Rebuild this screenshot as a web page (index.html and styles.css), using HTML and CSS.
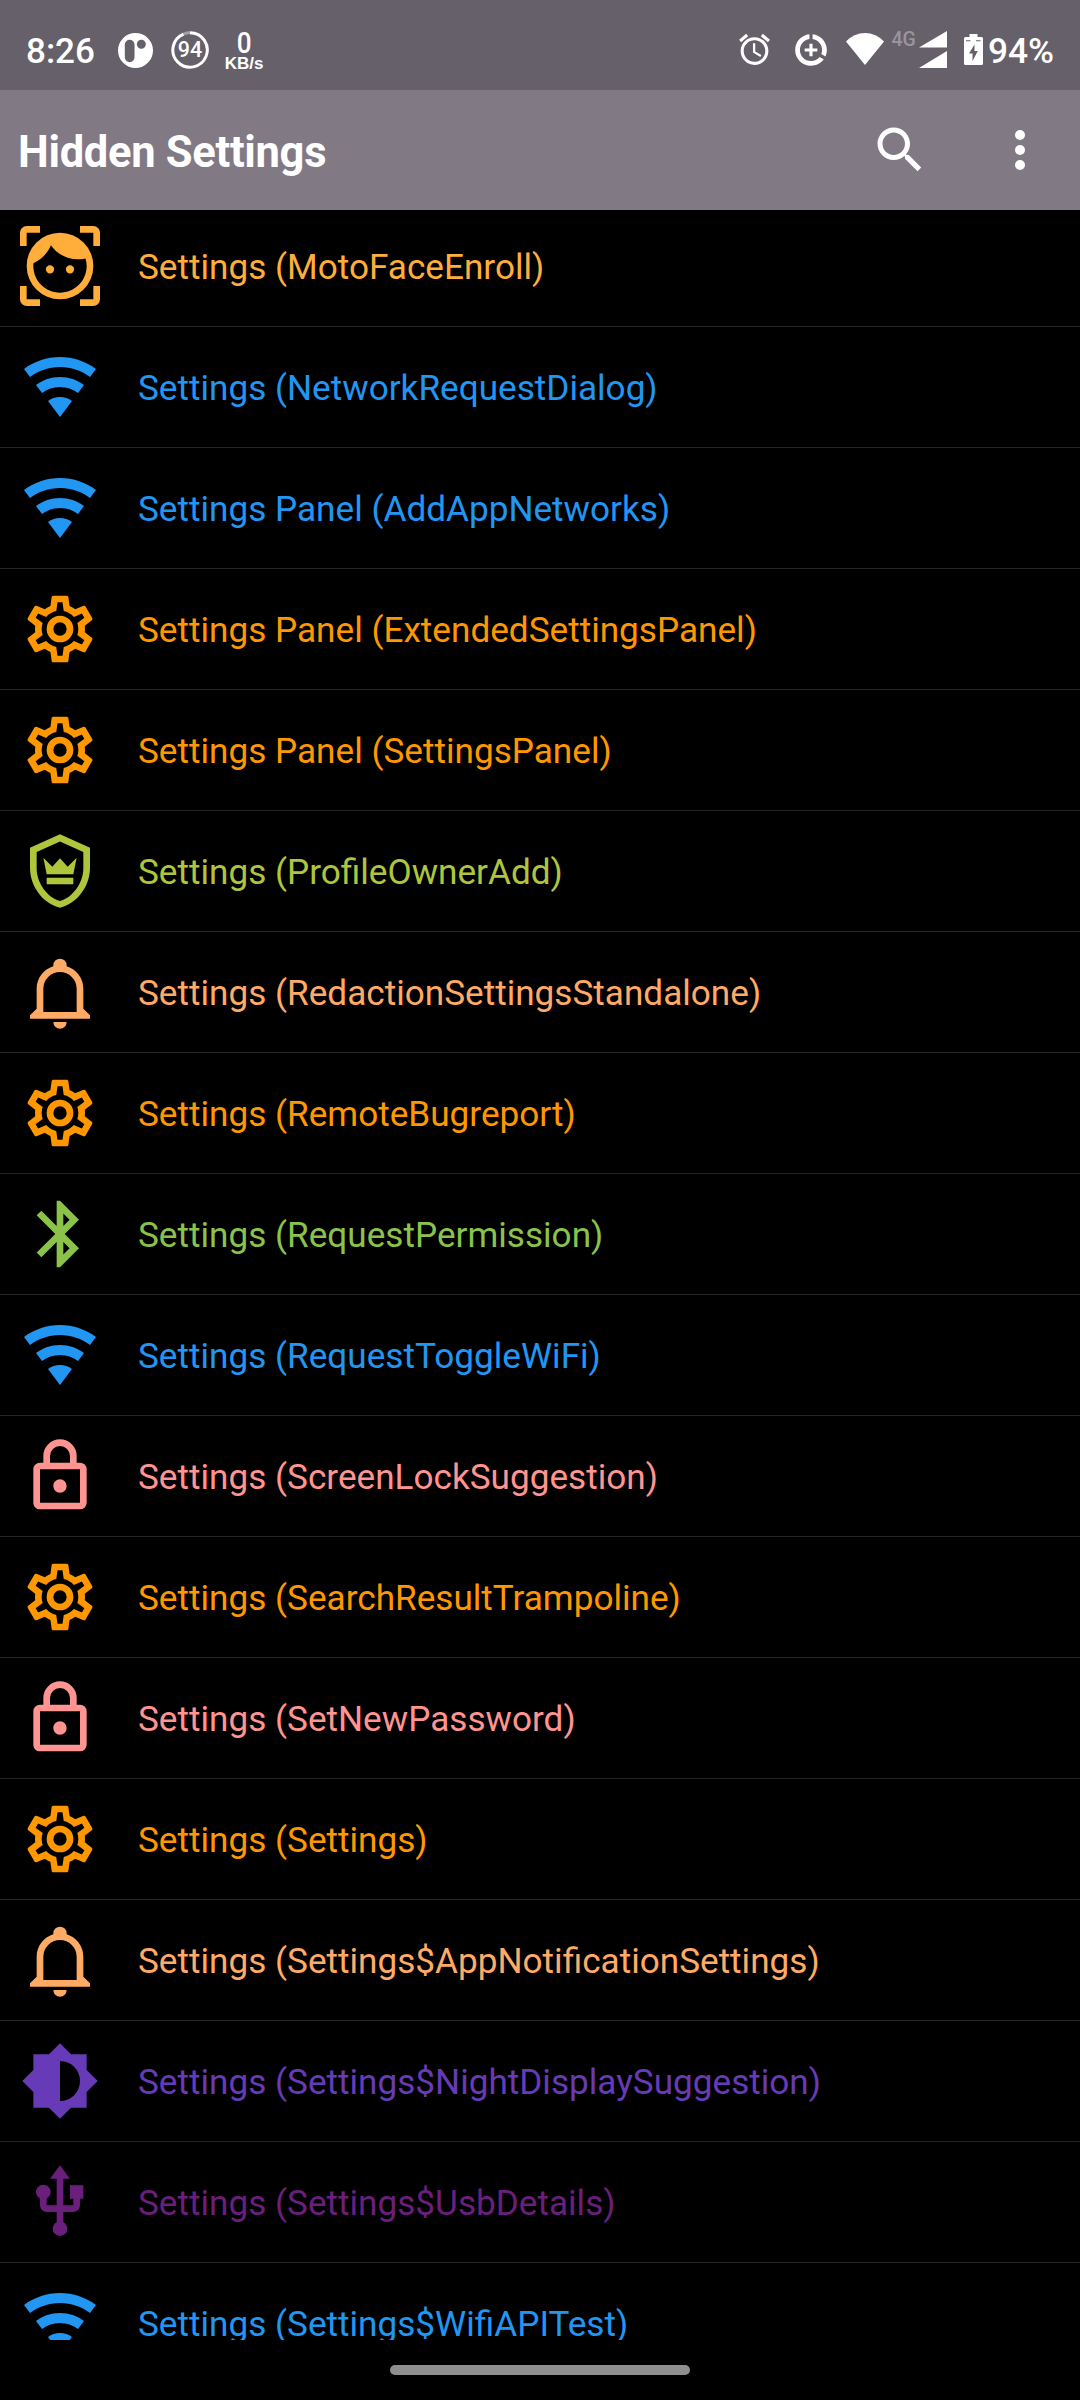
FILE: index.html
```
<!DOCTYPE html>
<html lang="en">
<head>
<meta charset="utf-8">
<title>Hidden Settings</title>
<link rel="stylesheet" href="styles.css">
</head>
<body>
<svg class="sprite" xmlns="http://www.w3.org/2000/svg">
  <symbol id="face" viewBox="0 0 24 24"><path d="M9,11.75A1.25,1.25 0 0,0 7.75,13A1.25,1.25 0 0,0 9,14.25A1.25,1.25 0 0,0 10.25,13A1.25,1.25 0 0,0 9,11.75M15,11.75A1.25,1.25 0 0,0 13.75,13A1.25,1.25 0 0,0 15,14.25A1.25,1.25 0 0,0 16.25,13A1.25,1.25 0 0,0 15,11.75M12,2A10,10 0 0,0 2,12A10,10 0 0,0 12,22A10,10 0 0,0 22,12A10,10 0 0,0 12,2M12,20C7.59,20 4,16.41 4,12C4,11.71 4,11.42 4.05,11.14C6.41,10.09 8.28,8.16 9.26,5.77C11.07,8.33 14.05,10 17.42,10C18.2,10 18.95,9.91 19.67,9.74C19.88,10.45 20,11.21 20,12C20,16.41 16.41,20 12,20M0,2A2,2 0 0,1 2,0H6V2H2V6H0V2M24,22A2,2 0 0,1 22,24H18V22H22V18H24V22M2,24A2,2 0 0,1 0,22V18H2V22H6V24H2M22,0A2,2 0 0,1 24,2V6H22V2H18V0H22Z"/></symbol>
  <symbol id="wifi" viewBox="0 0 24 24"><path d="M12,21L15.6,16.2C14.6,15.45 13.35,15 12,15C10.65,15 9.4,15.45 8.4,16.2L12,21M12,3C7.95,3 4.21,4.34 1.2,6.6L3,9C5.5,7.12 8.62,6 12,6C15.38,6 18.5,7.12 21,9L22.8,6.6C19.79,4.34 16.05,3 12,3M12,9C9.3,9 6.81,9.89 4.8,11.4L6.6,13.8C8.1,12.67 9.97,12 12,12C14.03,12 15.9,12.67 17.4,13.8L19.2,11.4C17.19,9.89 14.7,9 12,9Z"/></symbol>
  <symbol id="cog" viewBox="0 0 24 24"><path d="M12,8A4,4 0 0,1 16,12A4,4 0 0,1 12,16A4,4 0 0,1 8,12A4,4 0 0,1 12,8M12,10A2,2 0 0,0 10,12A2,2 0 0,0 12,14A2,2 0 0,0 14,12A2,2 0 0,0 12,10M10,22C9.75,22 9.54,21.82 9.5,21.58L9.13,18.93C8.5,18.68 7.96,18.34 7.44,17.94L4.95,18.95C4.73,19.03 4.46,18.95 4.34,18.73L2.34,15.27C2.21,15.05 2.27,14.78 2.46,14.63L4.57,12.97L4.5,12L4.57,11L2.46,9.37C2.27,9.22 2.21,8.95 2.34,8.73L4.34,5.27C4.46,5.05 4.73,4.96 4.95,5.05L7.44,6.05C7.96,5.66 8.5,5.32 9.13,5.07L9.5,2.42C9.54,2.18 9.75,2 10,2H14C14.25,2 14.46,2.18 14.5,2.42L14.87,5.07C15.5,5.32 16.04,5.66 16.56,6.05L19.05,5.05C19.27,4.96 19.54,5.05 19.66,5.27L21.66,8.73C21.79,8.95 21.73,9.22 21.54,9.37L19.43,11L19.5,12L19.43,13L21.54,14.63C21.73,14.78 21.79,15.05 21.66,15.27L19.66,18.73C19.54,18.95 19.27,19.04 19.05,18.95L16.56,17.95C16.04,18.34 15.5,18.68 14.87,18.93L14.5,21.58C14.46,21.82 14.25,22 14,22H10M11.25,4L10.88,6.61C9.68,6.86 8.62,7.5 7.85,8.39L5.44,7.35L4.69,8.65L6.8,10.2C6.4,11.37 6.4,12.64 6.8,13.8L4.68,15.36L5.43,16.66L7.86,15.62C8.63,16.5 9.68,17.14 10.87,17.38L11.24,20H12.76L13.13,17.39C14.32,17.14 15.37,16.5 16.14,15.62L18.57,16.66L19.32,15.36L17.2,13.81C17.6,12.64 17.6,11.37 17.2,10.2L19.31,8.65L18.56,7.35L16.15,8.39C15.38,7.5 14.32,6.86 13.12,6.62L12.75,4H11.25Z"/></symbol>
  <symbol id="shield" viewBox="0 0 24 24"><path d="M21,11C21,16.55 17.16,21.74 12,23C6.84,21.74 3,16.55 3,11V5L12,1L21,5V11M12,21C15.75,20 19,15.54 19,11.22V6.3L12,3.18L5,6.3V11.22C5,15.54 8.25,20 12,21ZM7,8L8,13H16L17,8L14.3,10.7L12,8.2L9.7,10.7L7,8ZM8,14H16V15.8L15.8,16H8.2L8,15.8Z"/></symbol>
  <symbol id="bell" viewBox="0 0 24 24"><path d="M10,21H14A2,2 0 0,1 12,23A2,2 0 0,1 10,21M21,19V20H3V19L5,17V11C5,7.9 7.03,5.17 10,4.29C10,4.19 10,4.1 10,4A2,2 0 0,1 12,2A2,2 0 0,1 14,4C14,4.1 14,4.19 14,4.29C16.97,5.17 19,7.9 19,11V17L21,19M17,11A5,5 0 0,0 12,6A5,5 0 0,0 7,11V18H17V11Z"/></symbol>
  <symbol id="bluetooth" viewBox="0 0 24 24"><path d="M14.88,16.29L13,18.17V14.41M13,5.83L14.88,7.71L13,9.58M17.71,7.71L12,2H11V9.58L6.41,5L5,6.41L10.59,12L5,17.58L6.41,19L11,14.41V22H12L17.71,16.29L13.41,12L17.71,7.71Z"/></symbol>
  <symbol id="lock" viewBox="0 0 24 24"><path d="M12,17C10.89,17 10,16.1 10,15C10,13.89 10.89,13 12,13A2,2 0 0,1 14,15A2,2 0 0,1 12,17M18,20V10H6V20H18M18,8A2,2 0 0,1 20,10V20A2,2 0 0,1 18,22H6C4.89,22 4,21.1 4,20V10C4,8.89 4.89,8 6,8H7V6A5,5 0 0,1 12,1A5,5 0 0,1 17,6V8H18M12,3A3,3 0 0,0 9,6V8H15V6A3,3 0 0,0 12,3Z"/></symbol>
  <symbol id="brightness" viewBox="0 0 24 24"><path d="M12,18V6A6,6 0 0,1 18,12A6,6 0 0,1 12,18M20,15.31L23.31,12L20,8.69V4H15.31L12,0.69L8.69,4H4V8.69L0.69,12L4,15.31V20H8.69L12,23.31L15.31,20H20V15.31Z"/></symbol>
  <symbol id="usb" viewBox="0 0 24 24"><path d="M15,7V11H16V13H13V5H15L12,1L9,5H11V13H8V10.93C8.7,10.56 9.2,9.85 9.2,9C9.2,7.78 8.21,6.8 7,6.8C5.78,6.8 4.8,7.78 4.8,9C4.8,9.85 5.3,10.56 6,10.93V13A2,2 0 0,0 8,15H11V18.05C10.29,18.41 9.8,19.15 9.8,20A2.2,2.2 0 0,0 12,22.2A2.2,2.2 0 0,0 14.2,20C14.2,19.15 13.71,18.41 13,18.05V15H16A2,2 0 0,0 18,13V11H19V7H15Z"/></symbol>
</svg>
<div class="screen">
  <header class="status">
    <span class="clock">8:26</span>
    <svg class="st-app" viewBox="0 0 36 36"><path fill-rule="evenodd" d="M18,0A18,18 0 0,1 18,36A18,18 0 0,1 18,0ZM12,7A5,5 0 0,0 7,12V25A5,5 0 0,0 17,25V12A5,5 0 0,0 12,7ZM24,7A4.600,4.600 0 0,0 24,16.200A4.600,4.600 0 0,0 24,7Z"/></svg>
    <span class="st-ring"><svg viewBox="0 0 38 38"><path class="line" d="M19,1.800A17.200,17.200 0 1,1 12.500,3.100"/><path class="faint" d="M12.500,3.100A17.200,17.200 0 0,1 19,1.800"/></svg><b>94</b></span>
    <span class="speed"><b class="num">0</b><b class="unit">KB/s</b></span>
    <span class="grow"></span>
    <svg class="st-alarm" viewBox="0 0 24 24"><path d="M22,5.720l-4.600,-3.860l-1.290,1.530l4.600,3.860L22,5.720zM7.880,3.390L6.600,1.860L2,5.710l1.290,1.530l4.590,-3.850zM12.500,8H11v6l4.750,2.850l0.750,-1.230l-4,-2.370V8zM12,4c-4.970,0 -9,4.030 -9,9s4.020,9 9,9c4.970,0 9,-4.030 9,-9s-4.030,-9 -9,-9zM12,20c-3.870,0 -7,-3.130 -7,-7s3.130,-7 7,-7 7,3.130 7,7 -3.130,7 -7,7z"/></svg>
    <svg class="st-saver" viewBox="0 0 24 24"><path d="M13,2.050v3.030c3.390,0.490 6,3.390 6,6.920 0,0.900 -0.180,1.750 -0.480,2.540l2.600,1.530c0.560,-1.240 0.880,-2.620 0.880,-4.070 0,-5.180 -3.950,-9.450 -9,-9.950zM12,19c-3.870,0 -7,-3.130 -7,-7 0,-3.530 2.610,-6.430 6,-6.920V2.050c-5.060,0.500 -9,4.760 -9,9.950 0,5.520 4.470,10 9.990,10 3.310,0 6.240,-1.610 8.060,-4.090l-2.600,-1.530C16.170,17.980 14.210,19 12,19zM11,8h2v3h3v2h-3v3h-2v-3H8v-2h3z"/></svg>
    <svg class="st-wifi" viewBox="0 0 38 32"><path d="M0,8.500Q8,0 19,0Q30,0 38,8.500L19,32Z"/></svg>
    <span class="net">4G</span>
    <svg class="st-signal" viewBox="0 0 28 37"><path d="M28,0V16.500H0ZM28,20V37H0Z"/></svg>
    <svg class="st-batt" viewBox="0 0 19 31"><path fill-rule="evenodd" d="M5.500,0H13.500V3H17.500Q19,3 19,4.500V29.500Q19,31 17.500,31H1.500Q0,31 0,29.500V4.500Q0,3 1.500,3H5.500ZM10.500,10.500L5,19.500H8.500V27L13.800,17H10.500ZM2,6.300V7.300H6.500V6.300ZM12,6.300V7.300H16.500V6.300Z"/></svg>
    <span class="pct">94%</span>
  </header>
  <div class="appbar">
    <h1>Hidden Settings</h1>
    <svg class="ab-icon" viewBox="0 0 24 24"><path d="M15.500,14h-0.790l-0.280,-0.270C15.410,12.590 16,11.110 16,9.500 16,5.910 13.090,3 9.500,3S3,5.910 3,9.500 5.910,16 9.500,16c1.610,0 3.090,-0.590 4.230,-1.570l0.270,0.280v0.790l5,4.990L20.490,19l-4.990,-5zM9.500,14C7.010,14 5,11.990 5,9.500S7.010,5 9.500,5 14,7.010 14,9.500 11.990,14 9.500,14z"/></svg>
    <svg class="ab-icon" viewBox="0 0 24 24"><circle cx="12" cy="6" r="2"/><circle cx="12" cy="12" r="2"/><circle cx="12" cy="18" r="2"/></svg>
  </div>
  <ul class="list">
    <li class="row amber"><svg><use href="#face"/></svg><span>Settings (MotoFaceEnroll)</span></li>
    <li class="row blue"><svg><use href="#wifi"/></svg><span>Settings (NetworkRequestDialog)</span></li>
    <li class="row blue"><svg><use href="#wifi"/></svg><span>Settings Panel (AddAppNetworks)</span></li>
    <li class="row orange"><svg><use href="#cog"/></svg><span>Settings Panel (ExtendedSettingsPanel)</span></li>
    <li class="row orange"><svg><use href="#cog"/></svg><span>Settings Panel (SettingsPanel)</span></li>
    <li class="row lime"><svg><use href="#shield"/></svg><span>Settings (ProfileOwnerAdd)</span></li>
    <li class="row peach"><svg><use href="#bell"/></svg><span>Settings (RedactionSettingsStandalone)</span></li>
    <li class="row orange"><svg><use href="#cog"/></svg><span>Settings (RemoteBugreport)</span></li>
    <li class="row green"><svg><use href="#bluetooth"/></svg><span>Settings (RequestPermission)</span></li>
    <li class="row blue"><svg><use href="#wifi"/></svg><span>Settings (RequestToggleWiFi)</span></li>
    <li class="row pink"><svg><use href="#lock"/></svg><span>Settings (ScreenLockSuggestion)</span></li>
    <li class="row orange"><svg><use href="#cog"/></svg><span>Settings (SearchResultTrampoline)</span></li>
    <li class="row pink"><svg><use href="#lock"/></svg><span>Settings (SetNewPassword)</span></li>
    <li class="row orange"><svg><use href="#cog"/></svg><span>Settings (Settings)</span></li>
    <li class="row peach"><svg><use href="#bell"/></svg><span>Settings (Settings$AppNotificationSettings)</span></li>
    <li class="row violet"><svg><use href="#brightness"/></svg><span>Settings (Settings$NightDisplaySuggestion)</span></li>
    <li class="row plum"><svg><use href="#usb"/></svg><span>Settings (Settings$UsbDetails)</span></li>
    <li class="row blue"><svg><use href="#wifi"/></svg><span>Settings (Settings$WifiAPITest)</span></li>
  </ul>
  <footer class="nav"><div class="pill"></div></footer>
</div>
</body>
</html>
```
FILE: styles.css
```
* { box-sizing: border-box; margin: 0; padding: 0; }
body { background: #000; font-family: Roboto, sans-serif; }
.sprite { display: none; }
.screen { width: 1080px; height: 2400px; display: flex; flex-direction: column; overflow: hidden; background: #000; }

.status { flex: none; height: 90px; padding: 10px 26px 0; display: flex; align-items: center; background: #66606a; color: #fff; white-space: nowrap; }
.status svg { flex: none; fill: #fff; }
.clock { width: 92px; padding-top: 2px; font-size: 35px; font-weight: 500; }
.st-app { width: 35px; height: 35px; }
.st-ring { width: 38px; height: 38px; margin-left: 18px; display: grid; place-items: center; }
.st-ring > * { grid-area: 1 / 1; }
.st-ring svg { width: 38px; height: 38px; }
.st-ring path { fill: none; stroke: #fff; stroke-width: 3; }
.st-ring .faint { stroke-opacity: .4; }
.st-ring b { font-size: 21.5px; line-height: 22px; font-weight: 500; }
.speed { width: 38px; margin-left: 16px; display: flex; flex-direction: column; align-items: center; }
.speed .num { font-size: 29px; line-height: 26px; font-weight: 500; transform: scaleX(.9); }
.speed .unit { font: bold 17px/15px "Liberation Sans", sans-serif; }
.grow { flex: 1; }
.st-alarm { width: 37px; height: 37px; margin: 0 19px 2px 0; }
.st-saver { width: 38px; height: 38px; margin: 0 15.5px 1px 0; }
.st-wifi { width: 38px; height: 32px; margin: 0 7.500px 2px 0; }
.net { width: 28px; height: 40px; font-size: 19.5px; line-height: 20px; font-weight: 500; color: #9a959c; }
.st-signal { width: 28px; height: 37px; margin: 0 17px 1px 0; }
.st-batt { width: 19px; height: 31px; margin: 0 4.500px 1px 0; }
.pct { padding-top: 2px; font-size: 35.3px; font-weight: 500; }

.appbar { flex: none; height: 120px; padding: 0 30px 0 18px; display: flex; align-items: center; gap: 60px; background: #817984; color: #fff; }
.appbar h1 { flex: 1; padding-top: 5px; font-size: 43.5px; font-weight: 700; letter-spacing: -0.3px; }
.ab-icon { width: 60px; height: 60px; fill: #fff; }

.list { flex: 1; min-height: 0; overflow: hidden; list-style: none; }
.row { height: 121px; padding-left: 20px; display: flex; align-items: center; gap: 38px; border-bottom: 1px solid #242424; font-size: 35.15px; color: var(--c); white-space: nowrap; }
.row:first-child { margin-top: -4px; }
.row svg { width: 80px; height: 80px; flex: none; fill: var(--c); }
.row span { padding-top: 2px; }
.amber { --c: #ffae3b; }
.blue { --c: #2196f3; }
.orange { --c: #ff9800; }
.lime { --c: #afc63c; }
.peach { --c: #ffab66; }
.green { --c: #8bc34a; }
.pink { --c: #ff9490; }
.violet { --c: #673ab7; }
.plum { --c: #6a1f7c; }

.nav { flex: none; height: 60px; display: flex; justify-content: center; align-items: center; }
.pill { width: 300px; height: 10px; border-radius: 5px; background: #8e8e8e; }
```
